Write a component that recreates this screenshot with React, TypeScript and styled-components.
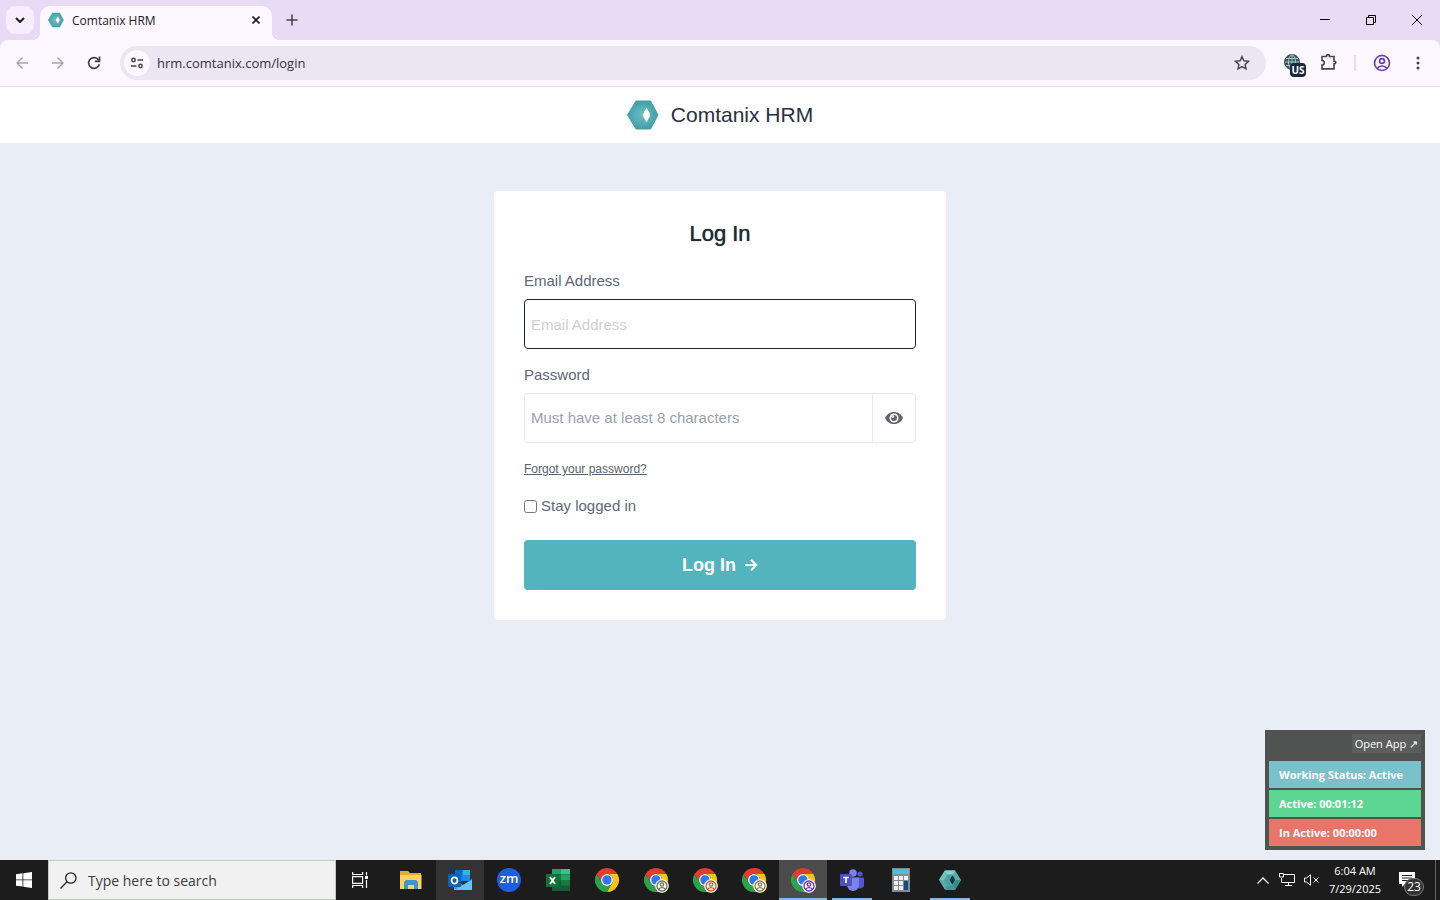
import React from "react";
import styled, { createGlobalStyle, css } from "styled-components";

const ui = `"Open Sans", "Noto Sans", sans-serif`;
const helv = `"Liberation Sans", Arial, sans-serif`;

const Global = createGlobalStyle`
  *, *::before, *::after { box-sizing: border-box; }
  body { margin: 0; font-family: ${helv}; }
  button { border: 0; padding: 0; background: none; font: inherit; color: inherit; cursor: pointer; }
  svg { display: block; flex: none; }
`;

const Desktop = styled.div`
  display: flex;
  flex-direction: column;
  min-height: 100vh;
`;

/* ---------- browser ---------- */
const TabStrip = styled.div`
  display: flex;
  align-items: flex-end;
  height: 40px;
  padding-left: 6px;
  background: #e9dbf5;
  font-family: ${ui};
  color: #1f1b24;
`;

const TabSearch = styled.button`
  display: grid;
  place-items: center;
  width: 28px;
  height: 28px;
  margin: 0 6px 6px 0;
  border-radius: 9px;
  background: #f7edfd;
`;

const Tab = styled.div`
  position: relative;
  display: flex;
  align-items: center;
  gap: 8px;
  width: 232px;
  height: 34px;
  padding: 0 8px 6px;
  border-radius: 10px 10px 0 0;
  background: #fdf7ff;
  font-size: 12px;
  &::before, &::after {
    content: "";
    position: absolute;
    bottom: 0;
    width: 8px;
    height: 8px;
  }
  &::before {
    right: 100%;
    background: radial-gradient(circle at 0 0, transparent 8px, #fdf7ff 8px);
  }
  &::after {
    left: 100%;
    background: radial-gradient(circle at 100% 0, transparent 8px, #fdf7ff 8px);
  }
`;

const TabTitle = styled.span`
  flex: 1;
`;

const TabButton = styled.button`
  display: grid;
  place-items: center;
  width: 16px;
  height: 16px;
`;

const NewTab = styled.button`
  display: grid;
  place-items: center;
  width: 28px;
  height: 28px;
  margin: 0 auto 6px 6px;
`;

const WindowButton = styled.button`
  display: grid;
  place-items: center;
  width: 46px;
  height: 40px;
`;

const ToolbarBack = styled.div`
  background: #e9dbf5;
`;

const Toolbar = styled.div`
  display: flex;
  align-items: center;
  height: 47px;
  padding: 0 4px;
  border-bottom: 1px solid #e8dcf0;
  border-radius: 8px 8px 0 0;
  background: #fdf7ff;
  color: #47434d;
`;

const ToolButton = styled.button`
  position: relative;
  display: grid;
  place-items: center;
  width: 36px;
  height: 34px;
`;

const CountryBadge = styled.span`
  position: absolute;
  right: 4px;
  bottom: 3px;
  width: 16px;
  border-radius: 4px;
  background: #17283f;
  color: #fff;
  font: bold 10px/14px ${ui};
  text-align: center;
`;

const Divider = styled.span`
  width: 2px;
  height: 16px;
  margin: 0 8px;
  background: #e9dcf2;
`;

const AddressBar = styled.div`
  display: flex;
  flex: 1;
  align-items: center;
  gap: 7px;
  height: 34px;
  margin: 0 8px;
  padding: 0 6px 0 4px;
  border-radius: 17px;
  background: #ece5f2;
`;

const SiteInfo = styled.button`
  display: grid;
  place-items: center;
  width: 26px;
  height: 26px;
  border-radius: 50%;
  background: #fdf7ff;
`;

const AddressInput = styled.input`
  flex: 1;
  border: 0;
  padding: 0;
  outline: 0;
  background: none;
  color: #36323b;
  font: 13px/20px ${ui};
`;

/* ---------- page ---------- */
const SiteHeader = styled.header`
  display: flex;
  align-items: center;
  justify-content: center;
  gap: 12px;
  height: 56px;
  background: #fff;
  color: #28303f;
  font-size: 21px;
`;

const Main = styled.main`
  position: relative;
  flex: 1;
  padding: 48px 16px;
  background: #e9edf5;
`;

const Card = styled.form`
  display: flex;
  flex-direction: column;
  max-width: 452px;
  margin: 0 auto;
  padding: 30px;
  border-radius: 4px;
  background: #fff;
  color: #5c6878;
  font-size: 15px;
  line-height: 20px;
`;

const Title = styled.h1`
  margin: 0 0 24px;
  color: #212b36;
  font-size: 22px;
  font-weight: 400;
  line-height: 26px;
  text-align: center;
  text-shadow: 0 0 1px #212b36;
`;

const Label = styled.label`
  margin-bottom: 8px;
`;

const field = css`
  height: 50px;
  border-radius: 4px;
  margin-bottom: 16px;
`;

const inputText = css`
  padding: 0 6px;
  outline: 0;
  background: #fff;
  color: #28303f;
  font: 15px/20px ${helv};
`;

const EmailInput = styled.input`
  ${field}
  ${inputText}
  width: 100%;
  border: 1px solid #1c252d;
  &::placeholder { color: #cfd0d8; opacity: 1; }
`;

const PasswordGroup = styled.div`
  ${field}
  display: flex;
  border: 1px solid #e8eaee;
  overflow: hidden;
`;

const PasswordInput = styled.input`
  ${inputText}
  flex: 1;
  min-width: 0;
  border: 0;
  &::placeholder { color: #989fb0; opacity: 1; }
`;

const RevealButton = styled.button`
  display: grid;
  place-items: center;
  width: 43px;
  && { border-left: 1px solid #e8eaee; }
`;

const ForgotLink = styled.a`
  align-self: flex-start;
  margin-bottom: 17px;
  color: #56616f;
  font-size: 12px;
`;

const StayRow = styled.label`
  display: flex;
  align-items: center;
  gap: 4px;
  margin-bottom: 24px;
`;

const Checkbox = styled.input`
  width: 13px;
  height: 13px;
  margin: 0;
`;

const Submit = styled.button`
  display: flex;
  align-items: center;
  justify-content: center;
  gap: 9px;
  height: 50px;
  border-radius: 4px;
  background: #54b4be;
  && { color: #fff; font-size: 18px; font-weight: 700; }
`;

/* ---------- status widget ---------- */
const Widget = styled.aside`
  position: absolute;
  right: 15px;
  bottom: 10px;
  display: flex;
  flex-direction: column;
  gap: 2px;
  width: 160px;
  padding: 4px;
  background: #505252;
  color: #fff;
  font: 11px/27px ${ui};
`;

const OpenApp = styled.button`
  align-self: flex-end;
  height: 19px;
  margin-bottom: 6px;
  padding: 0 3px;
  background: #5c5e5e;
  line-height: 19px;
`;

const Status = styled.div<{ $color: string }>`
  padding-left: 10px;
  background: ${(p) => p.$color};
  font-weight: 700;
  white-space: nowrap;
`;

/* ---------- taskbar ---------- */
const Taskbar = styled.footer`
  display: flex;
  height: 40px;
  background: #1c1c1c;
  color: #fff;
  font-family: ${ui};
`;

const SearchBox = styled.label`
  display: flex;
  align-items: center;
  gap: 11px;
  width: 288px;
  padding-left: 11px;
  border: 1px solid #c3c8c3;
  background: #f1f1f1;
`;

const SearchInput = styled.input`
  flex: 1;
  min-width: 0;
  border: 0;
  padding: 2px 0 0;
  outline: 0;
  background: none;
  font: 14px/20px ${ui};
  &::placeholder { color: #3c3c3c; opacity: 1; }
`;

const Apps = styled.nav`
  display: flex;
  flex: 1;
  gap: 1px;
  margin-left: 3px;
`;

const TaskButton = styled.button<{ $bg?: string; $line?: number }>`
  display: grid;
  place-items: center;
  width: 48px;
  height: 40px;
  background: ${(p) => p.$bg ?? "none"};
  ${(p) =>
    p.$line &&
    css`
      background: linear-gradient(#83b9e8, #83b9e8) bottom / ${p.$line}px 2px no-repeat ${p.$bg ?? "transparent"};
    `}
`;

const TrayButton = styled.button`
  display: grid;
  place-items: center;
  width: 24px;
`;

const Clock = styled.div`
  width: 64px;
  padding-top: 2px;
  font-size: 11px;
  line-height: 18px;
  text-align: center;
`;

const NoticeButton = styled.button`
  position: relative;
  width: 48px;
  padding-left: 12px;
`;

const NoticeCount = styled.span`
  position: absolute;
  left: 17px;
  top: 18px;
  width: 20px;
  height: 18px;
  border: 1px solid #777;
  border-radius: 9px;
  background: #333;
  font-size: 12px;
  line-height: 16px;
`;

const ShowDesktop = styled.button`
  width: 5px;
  && { border-left: 1px solid #666; }
`;

/* ---------- drawings ---------- */
const Logo = ({ size, dark }: { size: number; dark?: boolean }) =>
  dark ? (
    <svg width={size} height={size} viewBox="0 0 32 32" aria-hidden="true">
      <path d="M8.500 2h15L32 16l-8.500 14h-15L0 16z" fill="#56aeab" />
      <path d="M8.500 2h15l-3.500 6h-8z" fill="#8ed0cb" />
      <path d="M8.500 2L12 8l-4.500 8H0z" fill="#72c0bc" />
      <path d="M32 16l-8.500 14L20 24l4.500-8z" fill="#348b8c" />
      <path d="M8.500 30L12 24h8l3.500 6z" fill="#3f9a99" />
      <path d="M12 8h8l4.500 8-4.500 8h-8l-4.500-8z" fill="#4ba29f" />
      <path d="M19.500 9l4 7-4 7-4-7z" fill="#12343c" />
    </svg>
  ) : (
    <svg width={size} height={size} viewBox="0 0 32 32" aria-hidden="true">
      <defs>
        <radialGradient id="glow" cx="0.5" cy="0.5" r="0.5">
          <stop offset="0" stopColor="#6cbfc1" />
          <stop offset="0.5" stopColor="#58b1b7" />
          <stop offset="1" stopColor="#459fa9" />
        </radialGradient>
      </defs>
      <path d="M9 2h14.500l7.500 14-7.500 14H9L.5 16z" fill="url(#glow)" stroke="#459fa9" strokeLinejoin="round" />
      <path d="M19.500 8.500l4 7.500-4 7.500-4-7.500z" fill="#fff" />
    </svg>
  );

const Chrome = ({ badge }: { badge?: string }) => (
  <svg width="26" height="26" viewBox="-1 -1 26 26" aria-hidden="true">
    <path d="M1.600 6a12 12 0 0 1 20.800 0H12a6 6 0 0 0-5.200 9z" fill="#e33b2e" />
    <path d="M22.400 6A12 12 0 0 1 12 24l5.200-9A6 6 0 0 0 12 6z" fill="#fbc116" />
    <path d="M12 24A12 12 0 0 1 1.600 6l5.200 9a6 6 0 0 0 10.400 0z" fill="#2ba24c" />
    <circle cx="12" cy="12" r="6" fill="#fff" />
    <circle cx="12" cy="12" r="4.700" fill="#3079ea" />
    {badge && (
      <g fill="none" stroke={badge} strokeWidth="1.300">
        <circle cx="18" cy="18" r="6.300" fill="#fff" stroke="#fff" strokeWidth="1" />
        <circle cx="18" cy="18" r="5" />
        <circle cx="18" cy="16.500" r="1.700" />
        <path d="M14.500 21.300c1.800-2.200 5.200-2.200 7 0" />
      </g>
    )}
  </svg>
);

const FolderIcon = () => (
  <svg width="22" height="20" viewBox="0 0 22 20">
    <path d="M0 1h8l2 2h11v5H0z" fill="#e8a92c" />
    <path d="M0 5h21.500v14H0z" fill="#fdd262" />
    <path d="M4 19v-7l2-2h10l2 2v7h-4v-4H8v4z" fill="#3f95cf" />
  </svg>
);

const OutlookIcon = () => (
  <svg width="24" height="24" viewBox="0 0 24 24">
    <path d="M7 2h15v11H7z" fill="#1b7fd4" />
    <path d="M14.500 2H22v5h-7.500z" fill="#35b1ee" />
    <path d="M14.500 7H22v5h-7.500z" fill="#1a8be0" />
    <path d="M7 2h7.500v5H7z" fill="#0f68b8" />
    <path d="M6 11l9 6 9-6v11H6z" fill="#2aa5ea" />
    <path d="M6 22l18-10v10z" fill="#63c7f5" />
    <rect y="6" width="13" height="13" rx="1" fill="#0b63b5" />
    <ellipse cx="6.500" cy="12.500" rx="2.900" ry="3.200" fill="none" stroke="#fff" strokeWidth="1.800" />
  </svg>
);

const ZoomDisc = styled.span`
  width: 24px;
  height: 24px;
  border-radius: 50%;
  background: #1d5fe0;
  font: 600 13px/20px ${ui};
  text-align: center;
`;

const ExcelIcon = () => (
  <svg width="24" height="22" viewBox="0 0 24 22">
    <path d="M6 0h9v5.500H6z" fill="#23a366" />
    <path d="M15 0h9v5.500h-9z" fill="#34c481" />
    <path d="M6 5.500h9V11H6z" fill="#107c41" />
    <path d="M15 5.500h9V11h-9z" fill="#22a165" />
    <path d="M6 11h18v11H6z" fill="#185c37" />
    <path d="M15 11h9v5.500h-9z" fill="#107c41" />
    <rect y="5" width="13" height="13" rx="1" fill="#0f7039" />
    <path d="M4 8l5 7M9 8l-5 7" stroke="#fff" strokeWidth="2" />
  </svg>
);

const TeamsIcon = () => (
  <svg width="24" height="22" viewBox="0 0 24 22">
    <circle cx="20" cy="5" r="2.600" fill="#5059c9" />
    <path d="M16 8.500h8V15a4 4 0 0 1-8 1z" fill="#5059c9" />
    <circle cx="13" cy="4" r="3.800" fill="#7b83eb" />
    <path d="M7 8.500h12V16a6 6 0 0 1-12 0z" fill="#7b83eb" />
    <rect y="5" width="12" height="12" rx="1" fill="#4b53bc" />
    <path d="M3 8.500h6M6 8.500V14" stroke="#fff" strokeWidth="1.700" />
  </svg>
);

const CalcIcon = () => (
  <svg width="18" height="24" viewBox="0 0 18 24">
    <path d="M0 0h18v24H0z" fill="#838a91" />
    <path d="M1 1h16v5H1z" fill="#43bfe9" />
    <path d="M2 8h4v4H2zM7 8h4v4H7zM12 8h4v4h-4zM2 13h4v4H2zM7 13h4v4H7zM2 18h4v4H2zM7 18h4v4H7z" fill="#eef1f3" />
    <path d="M12 13h4v9h-4z" fill="#164a7c" />
  </svg>
);

export default function App() {
  return (
    <Desktop>
      <Global />
      <TabStrip>
        <TabSearch aria-label="Search tabs">
          <svg width="10" height="6" viewBox="0 0 10 6" fill="none" stroke="#1f1b24" strokeWidth="2"><path d="M1 1l4 4 4-4" /></svg>
        </TabSearch>
        <Tab>
          <Logo size={16} />
          <TabTitle>Comtanix HRM</TabTitle>
          <TabButton aria-label="Close tab">
            <svg width="8" height="8" viewBox="0 0 8 8" stroke="#1f1b24" strokeWidth="1.600"><path d="M.5.5l7 7M7.500.5l-7 7" /></svg>
          </TabButton>
        </Tab>
        <NewTab aria-label="New tab">
          <svg width="12" height="12" viewBox="0 0 12 12" stroke="#47434d" strokeWidth="1.600"><path d="M6 .5v11M.5 6h11" /></svg>
        </NewTab>
        <WindowButton aria-label="Minimize">
          <svg width="10" height="10" viewBox="0 0 10 10" stroke="#000"><path d="M0 4.500h10" /></svg>
        </WindowButton>
        <WindowButton aria-label="Restore">
          <svg width="10" height="10" viewBox="0 0 10 10" fill="none" stroke="#000"><path d="M.5 2.500h7v7h-7zM2.500 2.500v-2h7v7h-2" /></svg>
        </WindowButton>
        <WindowButton aria-label="Close window">
          <svg width="10" height="10" viewBox="0 0 10 10" stroke="#000"><path d="M0 0l10 10M10 0L0 10" /></svg>
        </WindowButton>
      </TabStrip>
      <ToolbarBack>
        <Toolbar>
          <ToolButton aria-label="Back">
            <svg width="12" height="12" viewBox="0 0 12 12" fill="none" stroke="#aaa5ae" strokeWidth="1.500"><path d="M12 6H1M6.500.5L1 6l5.500 5.500" /></svg>
          </ToolButton>
          <ToolButton aria-label="Forward">
            <svg width="12" height="12" viewBox="0 0 12 12" fill="none" stroke="#aaa5ae" strokeWidth="1.500"><path d="M0 6h11M5.500.5L11 6l-5.500 5.500" /></svg>
          </ToolButton>
          <ToolButton aria-label="Reload">
            <svg width="14" height="14" viewBox="0 0 14 14" fill="none" stroke="currentColor" strokeWidth="1.700"><path d="M12.300 8.200A5.400 5.400 0 1 1 11 3.300l1.500 1.500M12.500.5v4.800H7.800" /></svg>
          </ToolButton>
          <AddressBar>
            <SiteInfo aria-label="View site information">
              <svg width="12" height="12" viewBox="0 0 12 12" fill="none" stroke="currentColor" strokeWidth="1.500"><circle cx="2.500" cy="3" r="1.700" /><path d="M6.500 3H12M0 9h5.500" /><circle cx="9.500" cy="9" r="1.700" /></svg>
            </SiteInfo>
            <AddressInput aria-label="Address" defaultValue="hrm.comtanix.com/login" />
            <ToolButton aria-label="Bookmark this tab">
              <svg width="16" height="16" viewBox="0 0 16 16" fill="none" stroke="currentColor" strokeWidth="1.400"><path d="M8 1.600l1.900 4.200 4.600.5-3.400 3.100.9 4.500L8 11.600l-4 2.300.9-4.500L1.500 6.300l4.600-.5z" /></svg>
            </ToolButton>
          </AddressBar>
          <ToolButton aria-label="VPN">
            <svg width="18" height="18" viewBox="-1 0 18 18" fill="none" stroke="#9ec9bd" strokeWidth="1"><circle cx="8" cy="8" r="7.500" fill="#3b5a5f" stroke="#3b4d58" /><ellipse cx="8" cy="8" rx="3.500" ry="7" /><path d="M8 1v14M1 8h14M2 4.500h12M2 11.500h12" /></svg>
            <CountryBadge>US</CountryBadge>
          </ToolButton>
          <ToolButton aria-label="Extensions">
            <svg width="18" height="18" viewBox="-1 1 18 18" fill="none" stroke="currentColor" strokeWidth="1.600"><path d="M2 3.500h4.500v-.3a1.500 1.500 0 0 1 3 0v.3H14v4.800h.5a1.200 1.200 0 0 1 0 2.600H14v5H2v-3.800a2.300 2.300 0 0 0 0-4.600z" /></svg>
          </ToolButton>
          <Divider />
          <ToolButton aria-label="Profile">
            <svg width="18" height="18" viewBox="0 0 18 18" fill="none" stroke="#6b3aa8" strokeWidth="1.600"><circle cx="9" cy="9" r="7.500" /><circle cx="9" cy="7" r="2.400" /><path d="M4 14.200c2.500-3 7.500-3 10 0" /></svg>
          </ToolButton>
          <ToolButton aria-label="Menu">
            <svg width="4" height="14" viewBox="0 0 4 14" fill="currentColor"><circle cx="2" cy="2" r="1.500" /><circle cx="2" cy="7" r="1.500" /><circle cx="2" cy="12" r="1.500" /></svg>
          </ToolButton>
        </Toolbar>
      </ToolbarBack>
      <SiteHeader>
        <Logo size={32} />
        <span>Comtanix HRM</span>
      </SiteHeader>
      <Main>
        <Card onSubmit={(e) => e.preventDefault()}>
          <Title>Log In</Title>
          <Label htmlFor="email">Email Address</Label>
          <EmailInput id="email" type="email" placeholder="Email Address" />
          <Label htmlFor="password">Password</Label>
          <PasswordGroup>
            <PasswordInput id="password" type="password" placeholder="Must have at least 8 characters" />
            <RevealButton type="button" aria-label="Show password">
              <svg width="18" height="12" viewBox="0 0 18 12">
                <path d="M0 6C3.500-2 14.500-2 18 6c-3.500 8-14.500 8-18 0z" fill="#60646b" />
                <circle cx="9" cy="6" r="4.500" fill="#fff" />
                <circle cx="9" cy="6" r="3" fill="#60646b" />
                <circle cx="7.700" cy="4.700" r="1.400" fill="#fff" />
              </svg>
            </RevealButton>
          </PasswordGroup>
          <ForgotLink href="#forgot">Forgot your password?</ForgotLink>
          <StayRow>
            <Checkbox type="checkbox" />
            Stay logged in
          </StayRow>
          <Submit type="submit">
            Log In
            <svg width="13" height="12" viewBox="0 0 13 12" fill="none" stroke="#fff" strokeWidth="2"><path d="M0 6h11M6 .8L11.300 6 6 11.200" /></svg>
          </Submit>
        </Card>
        <Widget>
          <OpenApp>Open App ↗</OpenApp>
          <Status $color="#7bc1cc">Working Status: Active</Status>
          <Status $color="#5dd693">Active: 00:01:12</Status>
          <Status $color="#e9746a">In Active: 00:00:00</Status>
        </Widget>
      </Main>
      <Taskbar>
        <TaskButton aria-label="Start">
          <svg width="16" height="16" viewBox="0 0 16 16" fill="#fff"><path d="M0 2.200l6.500-.9v6.200H0zM7.300 1.200L16 0v7.500H7.300zM0 8.300h6.500v6.300L0 13.700zM7.300 8.300H16V16l-8.700-1.200z" /></svg>
        </TaskButton>
        <SearchBox>
          <svg width="17" height="17" viewBox="0 0 17 17" fill="none" stroke="#222" strokeWidth="1.300"><circle cx="10.800" cy="6" r="5.200" /><path d="M7 9.800L.5 16.500" /></svg>
          <SearchInput type="text" aria-label="Search" placeholder="Type here to search" />
        </SearchBox>
        <TaskButton aria-label="Task view">
          <svg width="17" height="16" viewBox="0 0 17 16" fill="none" stroke="#fff" strokeWidth="1.200"><path d="M.6 0v2.500h10V0M.6 16v-2.500h10V16M.6 4.600h10v6.800H.6zM14.500 0v3.500M14.500 8v8" /><path d="M13 4h3v3h-3z" fill="#fff" stroke="none" /></svg>
        </TaskButton>
        <Apps>
          <TaskButton aria-label="File Explorer"><FolderIcon /></TaskButton>
          <TaskButton aria-label="Outlook" $bg="#333"><OutlookIcon /></TaskButton>
          <TaskButton aria-label="Zoom"><ZoomDisc>zm</ZoomDisc></TaskButton>
          <TaskButton aria-label="Excel"><ExcelIcon /></TaskButton>
          <TaskButton aria-label="Chrome"><Chrome /></TaskButton>
          <TaskButton aria-label="Chrome, second profile"><Chrome badge="#66735a" /></TaskButton>
          <TaskButton aria-label="Chrome, third profile"><Chrome badge="#d9532c" /></TaskButton>
          <TaskButton aria-label="Chrome, fourth profile"><Chrome badge="#8f8040" /></TaskButton>
          <TaskButton aria-label="Chrome, current profile" $bg="#4b4b4b" $line={48}><Chrome badge="#6b2fb5" /></TaskButton>
          <TaskButton aria-label="Teams" $line={40}><TeamsIcon /></TaskButton>
          <TaskButton aria-label="Calculator"><CalcIcon /></TaskButton>
          <TaskButton aria-label="Comtanix" $line={40}><Logo size={22} dark /></TaskButton>
        </Apps>
        <TrayButton aria-label="Show hidden icons">
          <svg width="12" height="7" viewBox="0 0 12 7" fill="none" stroke="#fff" strokeWidth="1.300"><path d="M.5 6.500L6 1l5.500 5.500" /></svg>
        </TrayButton>
        <TrayButton aria-label="Network">
          <svg width="16" height="14" viewBox="0 0 16 14" fill="none" stroke="#fff"><path d="M5 1.500h10.500v8H2.500V5M9.500 9.500v3M6 12.500h7M.5.500h4V4h-4z" /></svg>
        </TrayButton>
        <TrayButton aria-label="Volume muted">
          <svg width="15" height="12" viewBox="0 0 15 12" fill="none" stroke="#fff"><path d="M.5 4h2L6.500.8v10.400L2.500 8h-2zM9.500 3.500l5 5M14.500 3.500l-5 5" /></svg>
        </TrayButton>
        <Clock>
          <div>6:04 AM</div>
          <div>7/29/2025</div>
        </Clock>
        <NoticeButton aria-label="Notifications, 23 new">
          <svg width="16" height="16" viewBox="0 0 16 16"><path d="M0 0h16v12H6l-3 3v-3H0z" fill="#fff" /><path d="M3 3.500h10M3 6h10M3 8.500h7" stroke="#1c1c1c" /></svg>
          <NoticeCount>23</NoticeCount>
        </NoticeButton>
        <ShowDesktop aria-label="Show desktop" />
      </Taskbar>
    </Desktop>
  );
}
